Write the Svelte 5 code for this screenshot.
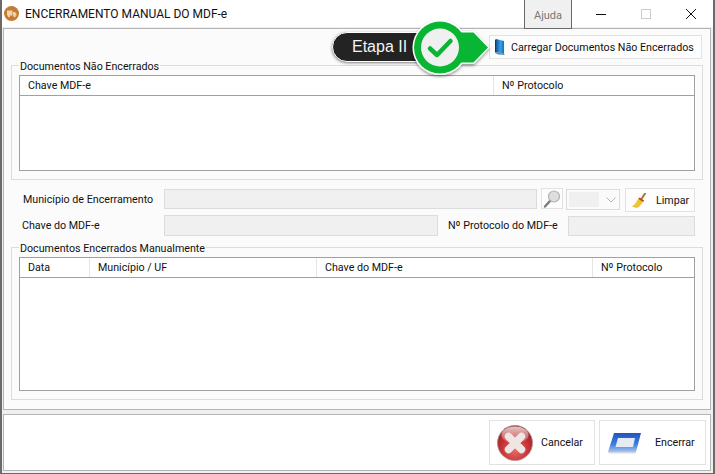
<script>
  const docCols = [
    { label: 'Chave MDF-e', width: 474 },
    { label: 'Nº Protocolo', width: 200 }
  ];
  const doneCols = [
    { label: 'Data', width: 70 },
    { label: 'Município / UF', width: 227 },
    { label: 'Chave do MDF-e', width: 276 },
    { label: 'Nº Protocolo', width: 101 }
  ];
</script>

<div class="window">
  <header class="titlebar">
    <svg class="appicon" width="15" height="15" viewBox="0 0 15 15">
      <circle cx="7.5" cy="7.5" r="7.5" fill="#c47a30" />
      <path d="M3 4.5h5.500v5H3zM9 6h2l1.500 2v1.500H9z" fill="#f1d5ae" />
      <circle cx="5" cy="10" r="1.200" fill="#f1d5ae" />
      <circle cx="10.500" cy="10" r="1.200" fill="#f1d5ae" />
    </svg>
    <span class="title">ENCERRAMENTO MANUAL DO MDF-e</span>
    <span class="help">Ajuda</span>
    <div class="controls">
      <svg width="10" height="10" viewBox="0 0 10 10"><path d="M0 5.5h10" stroke="#111" /></svg>
      <svg width="10" height="10" viewBox="0 0 10 10"><rect x=".5" y=".5" width="9" height="9" fill="none" stroke="#ccc" /></svg>
      <svg width="10" height="10" viewBox="0 0 10 10"><path d="M0 0l10 10M10 0L0 10" stroke="#111" /></svg>
    </div>
  </header>

  <section class="panel main">
    <div class="toolbar">
      <button class="btn load">
        <svg width="12" height="18" viewBox="0 0 12 18">
          <defs>
            <linearGradient id="book" x1="0" y1="0" x2="1" y2="0">
              <stop offset="0" stop-color="#1d4f8c" />
              <stop offset="0.55" stop-color="#2fa4ec" />
              <stop offset="1" stop-color="#1a6cb8" />
            </linearGradient>
          </defs>
          <path d="M2 1l8 2v13l-8-2z" fill="url(#book)" />
          <path d="M2 1L1 2v13l1-1z" fill="#17375f" />
          <path d="M1 15l1-1 8 2 1 1-7-.5z" fill="#6d86a3" />
        </svg>
        <span>Carregar Documentos Não Encerrados</span>
      </button>
    </div>

    <div class="group first">
      <div class="legend">Documentos Não Encerrados</div>
      <div class="list short">
        <div class="listhead">
          {#each docCols as col}
            <div class="col" style="width: {col.width}px">{col.label}</div>
          {/each}
        </div>
      </div>
    </div>

    <div class="form">
      <div class="row one">
        <span class="lbl muni">Município de Encerramento</span>
        <div class="field wide"></div>
        <button class="btn search" aria-label="Buscar">
          <svg width="20" height="20" viewBox="0 0 20 20">
            <path d="M8 12l-5 5.500" stroke="#7d7d7d" stroke-width="2.500" stroke-linecap="round" />
            <circle cx="12" cy="7.5" r="5.500" fill="#dedede" stroke="#b0b0b0" stroke-width="1.200" />
          </svg>
        </button>
        <div class="combo">
          <div class="comboval"></div>
          <svg width="10" height="6" viewBox="0 0 10 6"><path d="M.5.5L5 5 9.500.5" fill="none" stroke="#b5b5b5" /></svg>
        </div>
        <button class="btn clear">
          <svg width="15" height="15" viewBox="0 0 15 15">
            <path d="M9.500 6l3.500-5.500" stroke="#a87a2a" stroke-width="2" stroke-linecap="round" />
            <path d="M7 4.500l4.500 3-1.500 3-2.500 3L4.500 15 0 13.500l3-2.500z" fill="#eec33d" />
            <path d="M7.500 4.500l4.500 3-.8 1.400L6.500 6z" fill="#b8432f" />
          </svg>
          <span>Limpar</span>
        </button>
      </div>
      <div class="row two">
        <span class="lbl chave">Chave do MDF-e</span>
        <div class="field mid"></div>
        <span class="lbl proto">Nº Protocolo do MDF-e</span>
        <div class="field tail"></div>
      </div>
    </div>

    <div class="group second">
      <div class="legend">Documentos Encerrados Manualmente</div>
      <div class="list tall">
        <div class="listhead">
          {#each doneCols as col}
            <div class="col" style="width: {col.width}px">{col.label}</div>
          {/each}
        </div>
      </div>
    </div>
  </section>

  <footer class="panel actions">
    <button class="btn big cancel">
      <svg width="36" height="36" viewBox="0 0 36 36">
        <defs>
          <radialGradient id="ball" cx="50%" cy="70%" r="70%">
            <stop offset="0" stop-color="#e86a6a" />
            <stop offset="0.6" stop-color="#c42f30" />
            <stop offset="1" stop-color="#8f2426" />
          </radialGradient>
          <linearGradient id="shine" x1="0" y1="0" x2="0" y2="1">
            <stop offset="0" stop-color="#fff" stop-opacity=".75" />
            <stop offset="1" stop-color="#fff" stop-opacity=".1" />
          </linearGradient>
        </defs>
        <circle cx="18" cy="18" r="17.5" fill="url(#ball)" stroke="#b08a8a" stroke-width=".8" />
        <ellipse cx="18" cy="10" rx="13.500" ry="8.500" fill="url(#shine)" />
        <path d="M11.500 11.500l13 13M24.500 11.500l-13 13" stroke="#efe6e4" stroke-width="7.500" stroke-linecap="round" />
      </svg>
      <span>Cancelar</span>
    </button>
    <button class="btn big confirm">
      <svg width="34" height="22" viewBox="0 0 34 22">
        <defs>
          <linearGradient id="frame" x1="0" y1="0" x2="0" y2="1">
            <stop offset="0" stop-color="#1f55c0" />
            <stop offset="0.6" stop-color="#3f7fe0" />
            <stop offset="1" stop-color="#a9c6f2" />
          </linearGradient>
        </defs>
        <path d="M6 1h27l-5 19H0z" fill="url(#frame)" />
        <path d="M10 6h17l-2 9H7.500z" fill="#e6ebf3" />
        <path d="M0 20h28l-.5 1.500H1z" fill="#d5d9e0" />
      </svg>
      <span>Encerrar</span>
    </button>
  </footer>

  <div class="badge">
    <div class="pill">Etapa II</div>
    <svg class="stamp" width="84" height="60" viewBox="0 0 84 60">
      <defs>
        <filter id="soft" x="-10%" y="-10%" width="120%" height="130%">
          <feDropShadow dx="0" dy="1.500" stdDeviation="1.500" flood-color="#000" flood-opacity=".45" />
        </filter>
      </defs>
      <g filter="url(#soft)">
        <circle cx="29" cy="27.500" r="27.500" fill="#fff" />
        <path d="M29 11h34l15.500 16.500L63 44H29z" fill="#fff" />
      </g>
      <circle cx="29" cy="27.500" r="26" fill="#08b633" />
      <path d="M29 12.500h33.500L77 27.500 62.500 42.500H29z" fill="#08b633" />
      <circle cx="29" cy="27.500" r="19" fill="#f0f0f0" />
      <path d="M19 28.500l7 6.500L39.500 21" fill="none" stroke="#08b633" stroke-width="4.500" stroke-linecap="round" stroke-linejoin="round" />
    </svg>
  </div>
</div>

<style>
  :global(body) {
    margin: 0;
    background: #f0f0f0;
  }

  .window {
    position: relative;
    box-sizing: border-box;
    width: 715px;
    height: 474px;
    display: flex;
    flex-direction: column;
    padding: 0 2px 2px 1px;
    border: 2px solid #6a6a6a;
    border-top: none;
    border-bottom-width: 1px;
    background: #f0f0f0;
    font: 10.7px Roboto, Arial, sans-serif;
    color: #111;
    overflow: hidden;
  }

  .titlebar {
    display: flex;
    align-items: center;
    height: 27px;
    margin: 0 -2px 1px -1px;
    padding-left: 2px;
    background: #fff;
  }

  .appicon {
    margin-right: 6px;
  }

  .title {
    flex: 1;
    font-size: 12px;
    color: #111;
  }

  .help {
    position: relative;
    z-index: 1;
    align-self: flex-start;
    box-sizing: border-box;
    width: 48px;
    height: 29px;
    margin-right: 24px;
    padding-top: 9px;
    text-align: center;
    font-size: 11px;
    color: #777;
    background: #f0f0f0;
    border: 1px solid #6a6a6a;
    border-top: none;
  }

  .controls {
    display: flex;
    gap: 35px;
    margin-right: 17px;
  }

  .panel {
    box-sizing: border-box;
    border: 1px solid #b4b4b4;
  }

  .main {
    height: 382px;
    padding: 6px 7px 0 7px;
    background: #fbfbfb;
  }

  .toolbar {
    display: flex;
    justify-content: flex-end;
    height: 30px;
  }

  .btn {
    display: flex;
    align-items: center;
    box-sizing: border-box;
    padding: 0;
    font: inherit;
    color: #111;
    background: #fdfdfd;
    border: 1px solid #e2e2e2;
  }

  .load {
    width: 213px;
    height: 24px;
    margin-right: 1px;
    padding-left: 4px;
    gap: 5px;
    white-space: nowrap;
  }

  .group {
    box-sizing: border-box;
    border: 1px solid #dcdcdc;
    padding: 0 7px;
  }

  .first {
    height: 115px;
  }

  .second {
    height: 153px;
  }

  .legend {
    width: fit-content;
    height: 14px;
    margin: -7px 0 2px 0;
    padding: 0 1px;
    line-height: 16px;
    background: #fbfbfb;
  }

  .list {
    box-sizing: border-box;
    background: #fff;
    border: 1px solid #a0a0a0;
  }

  .short {
    height: 96px;
  }

  .tall {
    height: 134px;
  }

  .listhead {
    display: flex;
    height: 19px;
    border-bottom: 1px solid #a0a0a0;
  }

  .col {
    box-sizing: border-box;
    padding-left: 8px;
    line-height: 20px;
    border-right: 1px solid #e5e5e5;
  }

  .col:last-child {
    border-right: none;
  }

  .form {
    box-sizing: border-box;
    height: 67px;
    padding-top: 8px;
  }

  .row {
    display: flex;
  }

  .one {
    height: 25px;
    margin-bottom: 2px;
  }

  .two {
    height: 21px;
    align-items: center;
  }

  .lbl {
    box-sizing: border-box;
    white-space: nowrap;
  }

  .muni {
    width: 153px;
    padding-left: 12px;
    margin-top: 2px;
    line-height: 20px;
  }

  .chave {
    width: 153px;
    padding-left: 11px;
  }

  .proto {
    width: 130px;
    padding-left: 10px;
  }

  .field {
    box-sizing: border-box;
    height: 20px;
    background: #f0f0f0;
    border: 1px solid #dcdcdc;
  }

  .wide {
    width: 373px;
    margin-top: 1px;
  }

  .mid {
    width: 274px;
    height: 21px;
  }

  .tail {
    width: 127px;
  }

  .search {
    justify-content: center;
    width: 22px;
    height: 21px;
    margin: 0 3px 0 4px;
  }

  .combo {
    display: flex;
    align-items: center;
    box-sizing: border-box;
    width: 54px;
    height: 21px;
    margin-top: 1px;
    padding-left: 2px;
    background: #fbfbfb;
    border: 1px solid #dcdcdc;
  }

  .comboval {
    width: 30px;
    height: 15px;
    margin-right: 7px;
    background: #f0f0f0;
  }

  .clear {
    width: 70px;
    height: 24px;
    margin-left: 5px;
    padding-left: 6px;
    gap: 9px;
  }

  .actions {
    display: flex;
    justify-content: flex-end;
    gap: 4px;
    height: 57px;
    margin-top: 4px;
    padding: 5px 4px 0 0;
    background: #fff;
  }

  .big {
    height: 45px;
    background: #fff;
  }

  .cancel {
    width: 106px;
    padding-left: 7px;
    gap: 8px;
  }

  .confirm {
    width: 107px;
    padding-left: 8px;
    gap: 13px;
  }

  .badge {
    position: absolute;
    left: 330px;
    top: 20px;
    width: 160px;
    height: 62px;
  }

  .pill {
    box-sizing: border-box;
    width: 100px;
    height: 30px;
    margin-top: 12px;
    padding-left: 19px;
    font: 16px/27px "Liberation Sans", Arial, sans-serif;
    color: #f4f4f4;
    background: #232323;
    border: 1.5px solid #fff;
    border-radius: 15px;
    box-shadow: 0 1px 3px rgba(0, 0, 0, 0.5);
  }

  .stamp {
    position: absolute;
    left: 79px;
    top: 0;
  }
</style>
